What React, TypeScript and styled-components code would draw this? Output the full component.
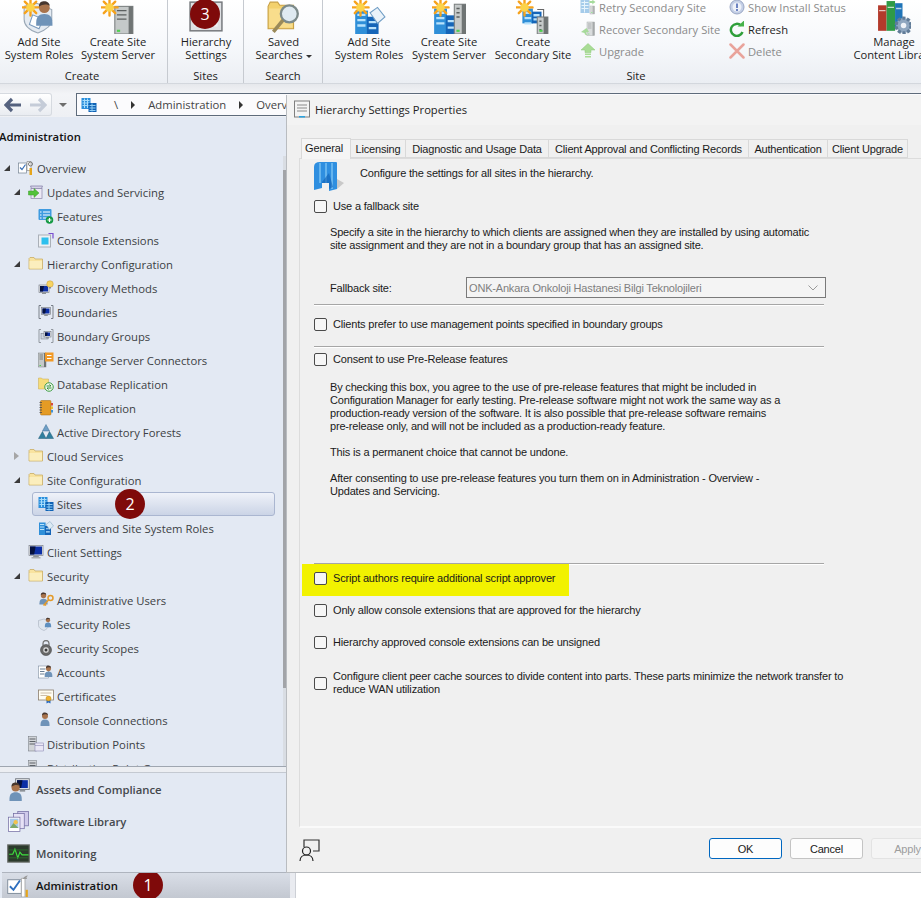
import React from "react";
import styled, { createGlobalStyle } from "styled-components";

const GlobalStyle = createGlobalStyle`
  html, body {
    margin: 0;
    padding: 0;
    width: 921px;
    height: 898px;
    overflow: hidden;
    background: #ffffff;
  }
  * { box-sizing: border-box; }
`;

const UI_FONT = `"Open Sans", "Noto Sans", sans-serif`;
const DIALOG_FONT = `"Liberation Sans", Arial, sans-serif`;

/* ---------- icons ---------- */

const Svg = ({ size = 16, children }: { size?: number; children: React.ReactNode }) => (
  <svg width={size} height={size} viewBox="0 0 32 32" style={{ flex: "none", display: "block" }}>
    {children}
  </svg>
);

const Sun = ({ x = 8, y = 8, r = 5 }: { x?: number; y?: number; r?: number }) => (
  <g>
    <g stroke="#f6a21c" strokeWidth="2.2" strokeLinecap="round">
      <path d={`M${x - r * 1.9} ${y}H${x + r * 1.9}M${x} ${y - r * 1.9}V${y + r * 1.9}`} />
      <path d={`M${x - r * 1.35} ${y - r * 1.35}L${x + r * 1.35} ${y + r * 1.35}M${x + r * 1.35} ${y - r * 1.35}L${x - r * 1.35} ${y + r * 1.35}`} />
    </g>
    <circle cx={x} cy={y} r={r} fill="#fcd34a" />
  </g>
);

const Person = ({ x = 20, y = 10, s = 1, coat = "#6f93b8" }: { x?: number; y?: number; s?: number; coat?: string }) => (
  <g transform={`translate(${x} ${y}) scale(${s})`}>
    <path d="M-9 16c0-7 3-10 9-10s9 3 9 10v3H-9z" fill={coat} />
    <circle cx="0" cy="-1" r="6" fill="#a8734c" />
    <path d="M-6-2c0-5 3-6 6-6s6 2 6 5c-3-2-8-2-12 1z" fill="#47372f" />
  </g>
);

const Tower = ({ x = 0, y = 0, h = 28, w = 14 }: { x?: number; y?: number; h?: number; w?: number }) => (
  <g>
    <rect x={x} y={y} width={w} height={h} fill="#c5c9c9" stroke="#7b8080" />
    <rect x={x + w - 4} y={y} width={4} height={h} fill="#6f7474" />
    <path d={`M${x + 2} ${y + 4}h${w - 8}M${x + 2} ${y + 8}h${w - 8}M${x + 2} ${y + 12}h${w - 8}`} stroke="#5c6060" strokeWidth="1.4" />
    <rect x={x + 2} y={y + h - 4} width="3" height="2" fill="#4fd04f" />
  </g>
);

const Building = ({ x = 0, y = 0, w = 22, h = 24 }: { x?: number; y?: number; w?: number; h?: number }) => (
  <g>
    <rect x={x} y={y + 3} width={w * 0.55} height={h - 3} fill="#2f8fd8" />
    <rect x={x + w * 0.5} y={y + h * 0.35} width={w * 0.5} height={h * 0.65} fill="#1565b8" />
    <path
      d={`M${x + 2} ${y + 7}h${w * 0.35}M${x + 2} ${y + 12}h${w * 0.35}M${x + 2} ${y + 17}h${w * 0.35}M${x + w * 0.58} ${y + h * 0.55}h${w * 0.32}M${x + w * 0.58} ${y + h * 0.78}h${w * 0.32}`}
      stroke="#b8e2fb"
      strokeWidth="2.2"
    />
  </g>
);

const Folder = () => (
  <Svg>
    <path d="M2 7V26h27V6H14l-2-3H4L2 5z" fill="#f8e3a0" stroke="#c9ad66" strokeWidth="1.6" />
    <path d="M3 10h25v15H3z" fill="#fbeebd" />
  </Svg>
);

const OverviewIcon = () => (
  <Svg>
    <rect x="1" y="6" width="16" height="20" fill="#fff" stroke="#7d8a99" strokeWidth="1.5" />
    <path d="M4 15l4 4 7-10" stroke="#3a71b7" strokeWidth="2.4" fill="none" />
    <path d="M18 3h8v18h-8z" fill="#fff" stroke="#8d8d8d" strokeWidth="1.4" />
    <rect x="23" y="16" width="5" height="14" fill="#e6a51c" />
    <circle cx="25" cy="8" r="4" fill="none" stroke="#777" strokeWidth="2" />
  </Svg>
);

const UpdatesIcon = () => (
  <Svg>
    <path d="M5 4h24l-2 5H7z" fill="#d5d3e8" stroke="#7e7aa3" strokeWidth="1.4" />
    <rect x="6" y="9" width="22" height="20" fill="#ece9f5" stroke="#8a87aa" strokeWidth="1.4" />
    <path d="M1 14h11V9l10 9-10 9v-5H1z" fill="#52c23b" stroke="#3c9a2a" />
  </Svg>
);

const FeaturesIcon = () => (
  <Svg>
    <rect x="1" y="2" width="26" height="22" rx="2" fill="#3f9be0" />
    <path d="M4 8h3M10 8h14M4 14h3M10 14h14M4 20h3M10 20h8" stroke="#fff" strokeWidth="2.2" />
    <circle cx="23" cy="24" r="7.5" fill="#169a45" />
    <path d="M23 20v8M19 24h8" stroke="#fff" strokeWidth="2.4" />
  </Svg>
);

const ExtensionsIcon = () => (
  <Svg>
    <rect x="1" y="6" width="24" height="24" fill="#eef0f3" stroke="#aab0b8" strokeWidth="2" />
    <rect x="7" y="11" width="14" height="14" fill="#2dc0ee" />
    <path d="M21 3h9v10" fill="none" stroke="#7a4fd0" strokeWidth="2.4" />
  </Svg>
);

const Monitor = ({ x = 6, y = 6, w = 20, h = 15 }: { x?: number; y?: number; w?: number; h?: number }) => (
  <g>
    <rect x={x} y={y} width={w} height={h} fill="#e7e9ec" stroke="#767b82" strokeWidth="1.3" />
    <rect x={x + 2} y={y + 2} width={w - 4} height={h - 4} fill="#0c2fa6" />
    <path d={`M${x + 2} ${y + 2}h${w * 0.4}l${-w * 0.1} ${h - 4}h${-w * 0.3}z`} fill="#05113f" />
    <rect x={x + w * 0.3} y={y + h} width={w * 0.4} height="3" fill="#8d9298" />
  </g>
);

const DiscoveryIcon = () => (
  <Svg>
    <Monitor x={2} y={10} w={20} h={15} />
    <circle cx="24" cy="8" r="6.5" fill="#f7d463" stroke="#c79b34" />
    <rect x="22" y="14" width="4" height="3" fill="#8c8c8c" />
  </Svg>
);

const BoundariesIcon = () => (
  <Svg>
    <path d="M6 3H2v26h4M26 3h4v26h-4" fill="none" stroke="#6f7680" strokeWidth="1.8" />
    <Monitor x={7} y={7} w={18} h={14} />
  </Svg>
);

const BoundaryGroupsIcon = () => (
  <Svg>
    <path d="M6 3H2v26h4M26 3h4v26h-4" fill="none" stroke="#8b9199" strokeWidth="1.8" />
    <rect x="6" y="11" width="14" height="11" fill="#cdd4df" stroke="#6d7480" />
    <Monitor x={12} y={7} w={14} h={11} />
  </Svg>
);

const ExchangeIcon = () => (
  <Svg>
    <Tower x={1} y={2} w={15} h={28} />
    <rect x="14" y="1" width="17" height="18" fill="#f19a27" />
    <path d="M18 7h9M18 13h9" stroke="#fff" strokeWidth="2" />
  </Svg>
);

const DbReplicationIcon = () => (
  <Svg>
    <path d="M1 4h6l2 2h12v20H1z" fill="#f6dd7a" stroke="#c9a94e" />
    <circle cx="22" cy="22" r="8.5" fill="#f2f7ee" stroke="#3f9e46" strokeWidth="2" />
    <path d="M17 20h9l-3-3M27 24h-9l3 3" fill="none" stroke="#2f8f38" strokeWidth="2" />
  </Svg>
);

const FileReplicationIcon = () => (
  <Svg>
    <rect x="5" y="1" width="21" height="29" rx="2" fill="#e49b25" stroke="#a76b10" />
    <path d="M3 5h5M3 10h5M3 15h5M3 20h5M3 25h5" stroke="#4a4a4a" strokeWidth="1.6" />
    <rect x="26" y="6" width="4" height="5" fill="#d84b3c" />
    <rect x="26" y="13" width="4" height="5" fill="#e7c12e" />
    <rect x="26" y="20" width="4" height="5" fill="#3f92d6" />
  </Svg>
);

const ForestsIcon = () => (
  <Svg>
    <path d="M16 1l7 13H9z" fill="#6f9fc6" stroke="#3c6e96" />
    <path d="M9 15l7 14H1z" fill="#2f7f9f" stroke="#245f78" />
    <path d="M23 15l8 14H16z" fill="#2f7f9f" stroke="#245f78" />
  </Svg>
);

const SitesIcon = () => (
  <Svg>
    <rect x="1" y="2" width="18" height="22" fill="#2c8fdc" />
    <path d="M3 7h14M3 12h14M3 17h14M7 3v19M13 3v19" stroke="#a6dcfb" strokeWidth="2" />
    <rect x="15" y="12" width="16" height="18" fill="#0f62b5" />
    <path d="M17 17h12M17 22h12M17 27h12M22 13v16" stroke="#8fcdf5" strokeWidth="2" />
  </Svg>
);

const ServersIcon = () => (
  <Svg>
    <Building x={2} y={2} w={24} h={28} />
    <path d="M16 9l8-6 7 9-8 7z" fill="#dceaf4" stroke="#7ca0bd" />
  </Svg>
);

const ClientSettingsIcon = () => (
  <Svg>
    <Monitor x={2} y={3} w={28} h={20} />
    <rect x="7" y="26" width="18" height="3" fill="#a9adb2" />
  </Svg>
);

const Key = () => (
  <g>
    <circle cx="25" cy="12" r="5" fill="none" stroke="#e39a2a" strokeWidth="3" />
    <path d="M21 16L11 27M13 24l3 3" stroke="#e39a2a" strokeWidth="3" />
  </g>
);

const AdminUsersIcon = () => (
  <Svg>
    <Person x={11} y={8} s={0.9} />
    <Key />
  </Svg>
);

const SecurityRolesIcon = () => (
  <Svg>
    <path d="M1 9l11-3 9 3v10c0 5-5 8-9 10-5-2-11-5-11-10z" fill="#dfe6ef" stroke="#9aa5b2" />
    <Person x={20} y={9} s={0.7} coat="#5e8fbf" />
  </Svg>
);

const ScopesIcon = () => (
  <Svg>
    <path d="M10 11V7a6 6 0 0112 0v4" fill="none" stroke="#777" strokeWidth="2.6" />
    <circle cx="16" cy="20" r="11" fill="#6a6a6a" stroke="#333" />
    <circle cx="16" cy="20" r="6.5" fill="#dcdcdc" stroke="#333" />
    <circle cx="16" cy="20" r="3" fill="#3a3a3a" />
  </Svg>
);

const AccountsIcon = () => (
  <Svg>
    <rect x="1" y="4" width="20" height="24" fill="#fff" stroke="#6b7d90" />
    <path d="M4 10h11M4 15h9M4 20h9" stroke="#5a6f86" strokeWidth="1.8" />
    <Person x={21} y={10} s={0.85} />
  </Svg>
);

const CertificatesIcon = () => (
  <Svg>
    <rect x="1" y="4" width="30" height="20" fill="#fffdf2" stroke="#8a7d6b" strokeWidth="1.6" />
    <path d="M5 10h22M5 15h14" stroke="#c6b79f" strokeWidth="1.8" />
    <path d="M17 24v7l4-2 4 2v-7" fill="#2a6bc2" />
    <circle cx="21" cy="21" r="5" fill="#efb12c" stroke="#bb8311" />
  </Svg>
);

const ConnectionsIcon = () => (
  <Svg>
    <Person x={14} y={9} s={1} />
  </Svg>
);

const DistPointsIcon = () => (
  <Svg>
    <rect x="1" y="1" width="16" height="29" fill="#d1d4d8" stroke="#6c7278" />
    <path d="M3 6h12M3 11h12M3 16h12" stroke="#50565c" strokeWidth="1.8" />
    <rect x="14" y="14" width="17" height="16" fill="#e9e7f5" stroke="#7b78a8" />
    <path d="M14 19h17" stroke="#7b78a8" />
  </Svg>
);

const AssetsIcon = () => (
  <Svg size={23}>
    <Monitor x={12} y={1} w={19} h={15} />
    <Person x={12} y={14} s={0.95} />
  </Svg>
);

const LibraryIcon = () => (
  <Svg size={23}>
    <rect x="15" y="2" width="15" height="20" fill="#cfc9ea" stroke="#6f6aa0" />
    <rect x="9" y="5" width="15" height="21" fill="#e6e1f5" stroke="#6f6aa0" />
    <rect x="2" y="10" width="16" height="20" fill="#fff" stroke="#6f6aa0" />
    <rect x="4" y="12" width="12" height="13" fill="#a9c9e8" />
    <path d="M4 25l5-7 7 7z" fill="#7da76a" />
    <circle cx="12" cy="17" r="3" fill="#f2c24b" />
  </Svg>
);

const MonitoringIcon = () => (
  <Svg size={23}>
    <rect x="1" y="4" width="30" height="24" fill="#2b3a2b" stroke="#6d716d" strokeWidth="1.6" />
    <path d="M3 17h5l3-7 4 12 3-8 3 4h9" fill="none" stroke="#3fe03f" strokeWidth="1.6" />
    <path d="M3 11h26M3 22h26" stroke="#2d7a2d" />
  </Svg>
);

const AdministrationIcon = () => (
  <Svg size={23}>
    <rect x="1" y="8" width="19" height="19" fill="#fff" stroke="#7d8a99" strokeWidth="1.3" />
    <path d="M4 17l5 5 9-13" stroke="#2f6fbe" strokeWidth="2.6" fill="none" />
    <path d="M20 6h5v26h-5z" fill="#fff" stroke="#9a9a9a" />
    <rect x="26" y="22" width="3" height="10" fill="#e6a51c" />
    <path d="M22 7c2-5 7-5 7-5l-2 3 1 2z" fill="#999" />
  </Svg>
);

const AddRolesIcon = () => (
  <Svg size={34}>
    <path d="M2 6l12-3 14 6v10c0 6-8 10-13 12C9 29 2 25 2 18z" fill="#e5ebf2" stroke="#9aa8b6" />
    <Sun x={8} y={7} r={4} />
    <path d="M10 14l10 4-4 9-9-4z" fill="#ffffff" stroke="#7a9abc" />
    <Person x={21} y={8} s={0.85} />
  </Svg>
);

const CreateServerIcon = () => (
  <Svg size={34}>
    <Tower x={13} y={6} w={17} h={26} />
    <Sun x={8} y={7} r={4} />
  </Svg>
);

const HierarchyRibbonIcon = () => (
  <Svg size={34}>
    <rect x="1" y="2" width="30" height="27" fill="#dfe1e4" stroke="#76797d" strokeWidth="1.4" />
    <rect x="5" y="7" width="22" height="18" fill="#eef1f4" />
  </Svg>
);

const SavedSearchIcon = () => (
  <Svg size={34}>
    <path d="M1 6V27h24V5H12L10 2H3z" fill="#f3d16d" stroke="#c79f43" />
    <path d="M2 8h22v18H2z" fill="#f8dd8c" />
    <circle cx="21" cy="13" r="8" fill="#dfeaf1" stroke="#7c8a8a" strokeWidth="2.2" />
    <path d="M15 19L6 30" stroke="#9a8a5a" strokeWidth="3.4" />
  </Svg>
);

const AddRolesBlueIcon = () => (
  <Svg size={34}>
    <Building x={3} y={7} w={22} h={25} />
    <path d="M17 12l7-5 7 9-7 6z" fill="#eaf2f9" stroke="#6e9cc4" />
    <Sun x={8} y={7} r={4} />
  </Svg>
);

const CreateServerBlueIcon = () => (
  <Svg size={34}>
    <Building x={2} y={5} w={22} h={27} />
    <Tower x={21} y={4} w={11} h={28} />
    <Sun x={8} y={7} r={4} />
  </Svg>
);

const CreateSecondaryIcon = () => (
  <Svg size={34}>
    <Building x={6} y={5} w={18} h={17} />
    <path d="M20 9h6v8" fill="none" stroke="#666" />
    <Tower x={20} y={16} w={10} h={16} />
    <Sun x={8} y={7} r={4} />
  </Svg>
);

const SitesGlyph = () => (
  <g>
    <rect x="1" y="2" width="18" height="26" fill="#5ea4da" />
    <path d="M3 7h14M3 13h14M3 19h14M9 3v24" stroke="#d3ecfb" strokeWidth="2" />
  </g>
);

const RetryIcon = () => (
  <Svg>
    <g opacity="0.55">
      <SitesGlyph />
      <path d="M19 4h6l-1-3 7 5-7 5 1-3h-6z" fill="#5fbf4c" />
      <Tower x={20} y={14} w={9} h={16} />
    </g>
  </Svg>
);

const RecoverIcon = () => (
  <Svg>
    <g opacity="0.6">
      <Tower x={14} y={2} w={15} h={27} />
      <path d="M13 14L2 22l7 2c0 3 3 5 6 5l-3-6 6-1z" fill="#72c65c" />
    </g>
  </Svg>
);

const UpgradeIcon = () => (
  <Svg>
    <path d="M16 1l14 13h-8v5H10v-5H2z" fill="#a9dc96" stroke="#8bc877" />
    <path d="M10 21h12v3H10zM10 26h12v3H10z" fill="#a9dc96" />
  </Svg>
);

const InfoIcon = () => (
  <Svg>
    <circle cx="16" cy="16" r="14" fill="#c4cfe6" stroke="#9aa7c4" strokeWidth="2" />
    <circle cx="16" cy="16" r="9" fill="#eef1f8" />
    <rect x="14" y="9" width="4" height="9" fill="#6d83c2" />
    <rect x="14" y="20" width="4" height="4" fill="#6d83c2" />
  </Svg>
);

const RefreshIcon = () => (
  <Svg>
    <path d="M24 9A12 12 0 1 0 27 22" fill="none" stroke="#2f9f3a" strokeWidth="5" />
    <path d="M17 11h13V-1z" fill="#45b24a" />
  </Svg>
);

const DeleteIcon = () => (
  <Svg>
    <path d="M3 3l26 26M29 3L3 29" stroke="#e9a39b" strokeWidth="5" strokeLinecap="round" />
  </Svg>
);

const ContentLibraryIcon = () => (
  <Svg size={34}>
    <rect x="1" y="5" width="8" height="24" fill="#b33a2b" />
    <rect x="9" y="1" width="8" height="28" fill="#2f9a46" />
    <rect x="17" y="3" width="7" height="24" fill="#1f74b8" />
    <path d="M2 10h6M10 7h6M18 8h5" stroke="#fff" strokeWidth="1.2" opacity="0.7" />
    <circle cx="25" cy="24" r="7" fill="#8fa7c0" stroke="#617c98" strokeWidth="3" strokeDasharray="3 1.5" />
    <circle cx="25" cy="24" r="2.6" fill="#eef3f8" />
  </Svg>
);

/* ---------- ribbon ---------- */

const Ribbon = styled.header`
  display: flex;
  height: 84px;
  background: linear-gradient(#ffffff 0%, #f6f8fb 55%, #ebeef3 100%);
  border-bottom: 1px solid #d3d7dd;
  font-family: ${UI_FONT};
  font-size: 11.2px;
  color: #1d1d1d;
  overflow: hidden;
`;

const RibbonGroup = styled.section<{ $w: number }>`
  flex: none;
  width: ${(p) => p.$w}px;
  display: flex;
  flex-direction: column;
  border-right: 1px solid #c6cad0;
`;

const GroupItems = styled.div<{ $pad?: number }>`
  flex: 1;
  display: flex;
  padding-left: ${(p) => p.$pad ?? 0}px;
`;

const GroupLabel = styled.div<{ $w?: number }>`
  height: 15px;
  width: ${(p) => (p.$w ? `${p.$w}px` : "auto")};
  line-height: 15px;
  text-align: center;
  color: #222;
`;

const BigButton = styled.div<{ $w: number }>`
  position: relative;
  flex: none;
  width: ${(p) => p.$w}px;
  display: flex;
  flex-direction: column;
  align-items: center;
  line-height: 13px;
  text-align: center;
  white-space: nowrap;
  & > svg {
    margin-bottom: 1px;
  }
`;

const SmallColumn = styled.div<{ $w: number; $gap?: number }>`
  flex: none;
  width: ${(p) => p.$w}px;
  display: flex;
  flex-direction: column;
  margin: -4px 0 0 ${(p) => p.$gap ?? 0}px;
`;

const SmallButton = styled.div<{ $off?: boolean }>`
  height: 22px;
  display: flex;
  align-items: center;
  gap: 3px;
  white-space: nowrap;
  color: ${(p) => (p.$off ? "#8b8b8b" : "#1d1d1d")};
`;

const Caret = styled.span`
  display: inline-block;
  margin-left: 3px;
  vertical-align: middle;
  border-left: 3px solid transparent;
  border-right: 3px solid transparent;
  border-top: 3px solid #333;
`;

const Badge = styled.div<{ $left: number; $top: number }>`
  position: absolute;
  left: ${(p) => p.$left}px;
  top: ${(p) => p.$top}px;
  width: 30px;
  height: 30px;
  border-radius: 50%;
  background: #7f0a0a;
  color: #ffffff;
  font-family: ${UI_FONT};
  font-size: 16px;
  font-weight: 400;
  line-height: 30px;
  text-align: center;
`;

/* ---------- navigation bar ---------- */

const Page = styled.div`
  position: relative;
  width: 921px;
  height: 898px;
  overflow: hidden;
  background: #ffffff;
`;

const NavStrip = styled.div`
  height: 33px;
  padding-top: 9px;
  display: flex;
  align-items: flex-start;
  background: linear-gradient(#e6e8ec, #f3f4f7 30%, #eef0f4);
  font-family: ${UI_FONT};
  font-size: 11.3px;
  color: #444;
`;

const BackForward = styled.div`
  flex: none;
  width: 52px;
  height: 23px;
  display: flex;
  align-items: center;
  justify-content: space-around;
  background: linear-gradient(#ffffff, #e9ecf1);
  border-radius: 0 3px 3px 0;
  border: 1px solid #d6dae0;
  border-left: none;
`;

const NavDrop = styled.div`
  flex: none;
  width: 24px;
  padding: 10px 0 0 7px;
  & > i {
    display: block;
    width: 0;
    border-left: 4px solid transparent;
    border-right: 4px solid transparent;
    border-top: 4px solid #6d6d6d;
  }
`;

const AddressBar = styled.div`
  flex: 1;
  height: 23px;
  display: flex;
  align-items: center;
  gap: 13px;
  padding-left: 4px;
  background: #fbfbfd;
  border: 1px solid #5e6b7b;
  border-right: none;
  & > svg {
    margin-right: 4px;
  }
`;

const Crumb = styled.span`
  white-space: nowrap;
`;

const CrumbArrow = styled.i`
  width: 0;
  border-top: 4px solid transparent;
  border-bottom: 4px solid transparent;
  border-left: 4px solid #333;
`;

/* ---------- left pane ---------- */

const Body = styled.div`
  display: flex;
  height: 781px;
`;

const LeftPane = styled.aside`
  flex: none;
  width: 290px;
  display: flex;
  flex-direction: column;
  background: #e3e9f3;
  font-family: ${UI_FONT};
  font-size: 11.3px;
  color: #3c3f44;
`;

const PaneEdge = styled.div`
  flex: none;
  width: 6px;
  background: #e9ebf0;
  border-right: 1px solid #cdd0d6;
`;

const PaneTitle = styled.div`
  height: 39px;
  padding: 12px 0 0 0;
  margin-left: -1px;
  font-weight: 600;
  color: #111;
`;

const TreeArea = styled.div`
  flex: none;
  height: 610px;
  display: flex;
  overflow: hidden;
`;

const TreeList = styled.ul`
  flex: none;
  width: 283px;
  margin: 0;
  padding: 0;
  list-style: none;
`;

const TreeRow = styled.li<{ $level: number }>`
  position: relative;
  height: 24px;
  display: flex;
  align-items: center;
  padding-left: ${(p) => p.$level * 10}px;
`;

const Expander = styled.span<{ $state?: "open" | "closed" }>`
  flex: none;
  width: 18px;
  height: 10px;
  position: relative;
  &::before {
    content: "";
    display: ${(p) => (p.$state ? "block" : "none")};
    position: absolute;
    left: 4px;
    top: ${(p) => (p.$state === "open" ? "2px" : "1px")};
    width: 0;
    ${(p) =>
      p.$state === "open"
        ? "border-left: 6px solid transparent; border-bottom: 6px solid #3a3a3a;"
        : "border-top: 4px solid transparent; border-bottom: 4px solid transparent; border-left: 5px solid #a6a6a6;"}
  }
`;

const TreeLabel = styled.div<{ $selected?: boolean }>`
  flex: 1;
  height: 24px;
  display: flex;
  align-items: center;
  gap: 3px;
  white-space: nowrap;
  ${(p) =>
    p.$selected &&
    `
    margin: 0 8px 0 -6px;
    padding-left: 5px;
    border: 1px solid #aab6d0;
    border-radius: 3px;
    background: linear-gradient(#eff2f9, #cbd4e6);
  `}
`;

const ScrollTrack = styled.div`
  flex: none;
  width: 3px;
  background: #d9dde3;
  padding-top: 14px;
`;

const ScrollThumb = styled.div`
  height: 518px;
  background: #a2a4a8;
`;

const Splitter = styled.div`
  height: 7px;
  background: #eceef2;
  border-top: 1px solid #9fa6b0;
  border-bottom: 1px solid #c4c9d1;
`;

const WunderRow = styled.div`
  height: 32px;
  display: flex;
  align-items: center;
  gap: 6px;
  padding-left: 7px;
  font-weight: 600;
  font-size: 11.3px;
  color: #45484d;
`;

const WunderSelected = styled(WunderRow)`
  position: relative;
  height: 26px;
  margin: 3px 0 0 2px;
  padding-left: 5px;
  overflow: hidden;
  color: #111;
  background: linear-gradient(#d9dee7, #c3c8d1);
  border-top: 1px solid #aeb4be;
`;

/* ---------- dialog ---------- */

const Dialog = styled.div`
  position: absolute;
  left: 286px;
  top: 95px;
  width: 660px;
  height: 778px;
  display: flex;
  flex-direction: column;
  background: #f0f0f0;
  border-left: 1px solid #b9bcc0;
  border-bottom: 1px solid #b9bcc0;
  font-family: ${DIALOG_FONT};
  font-size: 11px;
  letter-spacing: -0.18px;
  color: #1a1a1a;
`;

const TitleBar = styled.div`
  flex: none;
  height: 30px;
  padding: 0 0 2px 7px;
  display: flex;
  align-items: center;
  gap: 5px;
  background: #f3f3f3;
  font-family: ${UI_FONT};
  font-size: 11.2px;
  letter-spacing: 0;
  color: #222;
`;

const TabStrip = styled.div`
  flex: none;
  height: 33px;
  padding: 13px 0 0 14px;
  display: flex;
  align-items: flex-end;
`;

const Tab = styled.div<{ $w: number; $active?: boolean }>`
  flex: none;
  width: ${(p) => p.$w}px;
  height: ${(p) => (p.$active ? 21 : 19)}px;
  line-height: 18px;
  text-align: center;
  white-space: nowrap;
  padding-right: ${(p) => (p.$active ? 4 : 0)}px;
  border: 1px solid #d9d9d9;
  border-bottom: ${(p) => (p.$active ? "none" : "1px solid #d9d9d9")};
  border-left: ${(p) => (p.$active ? "1px solid #d9d9d9" : "none")};
  background: ${(p) => (p.$active ? "#f5f5f5" : "#f0f0f0")};
  margin-bottom: ${(p) => (p.$active ? "-1px" : "0")};
  position: relative;
`;

const TabPanel = styled.div`
  flex: none;
  height: 670px;
  margin-left: 12px;
  padding: 0 0 0 14px;
  border-top: 1px solid #dcdcdc;
  border-left: 1px solid #dcdcdc;
  border-bottom: 2px solid #fafafa;
  overflow: hidden;
`;

const PanelHead = styled.div`
  height: 41px;
  padding-top: 6px;
  margin-left: -1px;
  display: flex;
  gap: 15px;
  line-height: 16px;
  & > svg {
    margin-top: -4px;
  }
`;

const CheckRow = styled.label<{ $top?: number; $highlight?: boolean }>`
  display: flex;
  align-items: center;
  gap: 6px;
  margin-top: ${(p) => p.$top ?? 0}px;
  min-height: 20px;
  line-height: 13px;
  white-space: nowrap;
  ${(p) =>
    p.$highlight &&
    `
    width: 267px;
    height: 32px;
    margin-left: -12px;
    padding: 0 0 3px 12px;
    background: #f2f200;
  `}
`;

const Box = styled.span`
  flex: none;
  width: 13px;
  height: 13px;
  border: 1px solid #4a4a4a;
  border-radius: 2px;
  background: #f6f6f6;
`;

const Paragraph = styled.p<{ $top: number }>`
  margin: ${(p) => p.$top}px 0 0 16px;
  line-height: 13px;
  white-space: pre-line;
`;

const FieldRow = styled.div`
  display: flex;
  align-items: center;
  margin: 25px 0 0 16px;
  height: 21px;
`;

const FieldLabel = styled.span`
  flex: none;
  width: 136px;
`;

const SelectBox = styled.div`
  flex: none;
  width: 360px;
  height: 21px;
  display: flex;
  align-items: center;
  justify-content: space-between;
  padding: 0 7px 0 2px;
  border: 1px solid #7a7a7a;
  background: #f4f4f4;
  color: #7f7f7f;
`;

const Divider = styled.hr<{ $top: number }>`
  width: 510px;
  height: 1px;
  margin: ${(p) => p.$top}px 0 0 0;
  border: none;
  background: #a6a6a6;
  box-shadow: 0 1px 0 #ffffff;
`;

const Footer = styled.div`
  flex: 1;
  display: flex;
  align-items: flex-start;
  padding: 10px 0 0 12px;
  gap: 8px;
`;

const FooterIcon = styled.div`
  margin-right: 380px;
`;

const DialogButton = styled.button<{ $kind?: "primary" | "disabled" }>`
  flex: none;
  width: 73px;
  height: 21px;
  padding: 0;
  font: inherit;
  letter-spacing: inherit;
  border-radius: 3px;
  background: ${(p) => (p.$kind === "disabled" ? "#f5f5f5" : "#fdfdfd")};
  color: ${(p) => (p.$kind === "disabled" ? "#9d9d9d" : "#1a1a1a")};
  border: 1px solid
    ${(p) => (p.$kind === "primary" ? "#0067c0" : p.$kind === "disabled" ? "#e3e3e3" : "#c4c4c4")};
`;

/* ---------- data ---------- */

type Node = {
  label: string;
  level: number;
  state?: "open" | "closed";
  icon: React.ReactNode;
  selected?: boolean;
  badge?: string;
};

const tree: Node[] = [
  { label: "Overview", level: 0, state: "open", icon: <OverviewIcon /> },
  { label: "Updates and Servicing", level: 1, state: "open", icon: <UpdatesIcon /> },
  { label: "Features", level: 2, icon: <FeaturesIcon /> },
  { label: "Console Extensions", level: 2, icon: <ExtensionsIcon /> },
  { label: "Hierarchy Configuration", level: 1, state: "open", icon: <Folder /> },
  { label: "Discovery Methods", level: 2, icon: <DiscoveryIcon /> },
  { label: "Boundaries", level: 2, icon: <BoundariesIcon /> },
  { label: "Boundary Groups", level: 2, icon: <BoundaryGroupsIcon /> },
  { label: "Exchange Server Connectors", level: 2, icon: <ExchangeIcon /> },
  { label: "Database Replication", level: 2, icon: <DbReplicationIcon /> },
  { label: "File Replication", level: 2, icon: <FileReplicationIcon /> },
  { label: "Active Directory Forests", level: 2, icon: <ForestsIcon /> },
  { label: "Cloud Services", level: 1, state: "closed", icon: <Folder /> },
  { label: "Site Configuration", level: 1, state: "open", icon: <Folder /> },
  { label: "Sites", level: 2, icon: <SitesIcon />, selected: true, badge: "2" },
  { label: "Servers and Site System Roles", level: 2, icon: <ServersIcon /> },
  { label: "Client Settings", level: 1, icon: <ClientSettingsIcon /> },
  { label: "Security", level: 1, state: "open", icon: <Folder /> },
  { label: "Administrative Users", level: 2, icon: <AdminUsersIcon /> },
  { label: "Security Roles", level: 2, icon: <SecurityRolesIcon /> },
  { label: "Security Scopes", level: 2, icon: <ScopesIcon /> },
  { label: "Accounts", level: 2, icon: <AccountsIcon /> },
  { label: "Certificates", level: 2, icon: <CertificatesIcon /> },
  { label: "Console Connections", level: 2, icon: <ConnectionsIcon /> },
  { label: "Distribution Points", level: 1, icon: <DistPointsIcon /> },
  { label: "Distribution Point Groups", level: 1, icon: <DistPointsIcon /> },
];

const tabs = [
  { label: "General", w: 50, active: true },
  { label: "Licensing", w: 55 },
  { label: "Diagnostic and Usage Data", w: 143 },
  { label: "Client Approval and Conflicting Records", w: 200 },
  { label: "Authentication", w: 79 },
  { label: "Client Upgrade", w: 80 },
];

function Arrow({ dim, flip }: { dim?: boolean; flip?: boolean }) {
  return (
    <svg width="18" height="16" viewBox="0 0 18 16" style={{ transform: flip ? "scaleX(-1)" : "none" }}>
      <path d="M2 8H17M8 2L2 8l6 6" fill="none" stroke={dim ? "#c5ccd8" : "#55627f"} strokeWidth="3.2" />
    </svg>
  );
}

function App() {
  return (
    <Page>
      <GlobalStyle />
      <Ribbon>
        <RibbonGroup $w={168}>
          <GroupItems>
            <BigButton $w={78}>
              <AddRolesIcon />
              Add Site
              <br />
              System Roles
            </BigButton>
            <BigButton $w={80}>
              <CreateServerIcon />
              Create Site
              <br />
              System Server
            </BigButton>
          </GroupItems>
          <GroupLabel $w={164}>Create</GroupLabel>
        </RibbonGroup>
        <RibbonGroup $w={76}>
          <GroupItems>
            <BigButton $w={76}>
              <HierarchyRibbonIcon />
              Hierarchy
              <br />
              Settings
              <Badge $left={22} $top={-1}>3</Badge>
            </BigButton>
          </GroupItems>
          <GroupLabel>Sites</GroupLabel>
        </RibbonGroup>
        <RibbonGroup $w={79}>
          <GroupItems>
            <BigButton $w={79}>
              <SavedSearchIcon />
              Saved
              <br />
              <span>
                Searches
                <Caret />
              </span>
            </BigButton>
          </GroupItems>
          <GroupLabel>Search</GroupLabel>
        </RibbonGroup>
        <RibbonGroup $w={650}>
          <GroupItems $pad={10}>
            <BigButton $w={72}>
              <AddRolesBlueIcon />
              Add Site
              <br />
              System Roles
            </BigButton>
            <BigButton $w={88}>
              <CreateServerBlueIcon />
              Create Site
              <br />
              System Server
            </BigButton>
            <BigButton $w={80}>
              <CreateSecondaryIcon />
              Create
              <br />
              Secondary Site
            </BigButton>
            <SmallColumn $w={149} $gap={7}>
              <SmallButton $off>
                <RetryIcon />
                Retry Secondary Site
              </SmallButton>
              <SmallButton $off>
                <RecoverIcon />
                Recover Secondary Site
              </SmallButton>
              <SmallButton $off>
                <UpgradeIcon />
                Upgrade
              </SmallButton>
            </SmallColumn>
            <SmallColumn $w={125}>
              <SmallButton $off>
                <InfoIcon />
                Show Install Status
              </SmallButton>
              <SmallButton>
                <RefreshIcon />
                Refresh
              </SmallButton>
              <SmallButton $off>
                <DeleteIcon />
                Delete
              </SmallButton>
            </SmallColumn>
            <BigButton $w={80}>
              <ContentLibraryIcon />
              Manage
              <br />
              Content Library
            </BigButton>
          </GroupItems>
          <GroupLabel $w={626}>Site</GroupLabel>
        </RibbonGroup>
      </Ribbon>

      <NavStrip>
        <BackForward>
          <Arrow />
          <Arrow dim flip />
        </BackForward>
        <NavDrop>
          <i />
        </NavDrop>
        <AddressBar>
          <SitesIcon />
          <Crumb>\</Crumb>
          <CrumbArrow />
          <Crumb>Administration</Crumb>
          <CrumbArrow />
          <Crumb>Overview</Crumb>
        </AddressBar>
      </NavStrip>

      <Body>
        <LeftPane>
          <PaneTitle>Administration</PaneTitle>
          <TreeArea>
            <TreeList>
              {tree.map((node) => (
                <TreeRow key={node.label} $level={node.level}>
                  <Expander $state={node.state} />
                  <TreeLabel $selected={node.selected}>
                    {node.icon}
                    {node.label}
                  </TreeLabel>
                  {node.badge && (
                    <Badge $left={115} $top={-3}>
                      {node.badge}
                    </Badge>
                  )}
                </TreeRow>
              ))}
            </TreeList>
            <ScrollTrack>
              <ScrollThumb />
            </ScrollTrack>
          </TreeArea>
          <Splitter />
          <WunderRow>
            <AssetsIcon />
            Assets and Compliance
          </WunderRow>
          <WunderRow>
            <LibraryIcon />
            Software Library
          </WunderRow>
          <WunderRow>
            <MonitoringIcon />
            Monitoring
          </WunderRow>
          <WunderSelected>
            <AdministrationIcon />
            Administration
            <Badge $left={131} $top={-3}>1</Badge>
          </WunderSelected>
        </LeftPane>
        <PaneEdge />
      </Body>

      <Dialog>
        <TitleBar>
          <svg width="16" height="18" viewBox="0 0 16 18">
            <rect x="0.5" y="1" width="15" height="16" fill="#f4f4f4" stroke="#7f7f7f" />
            <path d="M3 5h10M3 8h10M3 11h10" stroke="#8a8a8a" />
            <rect x="5" y="16" width="6" height="1.5" fill="#2aa3e0" />
          </svg>
          Hierarchy Settings Properties
        </TitleBar>
        <TabStrip>
          {tabs.map((tab) => (
            <Tab key={tab.label} $w={tab.w} $active={tab.active}>
              {tab.label}
            </Tab>
          ))}
        </TabStrip>
        <TabPanel>
          <PanelHead>
            <Svg size={32}>
              <path d="M1 6q0-5 6-5h16q1 0 1 1v26l-8 2V22H9v5l-8 2z" fill="#2f8fe0" />
              <path d="M7 2v20M13 2v20M19 2v26" stroke="#7cc4f4" strokeWidth="1.4" />
              <path d="M9 21l7-9 4 14-4 2v-6H9z" fill="#0f5fb4" opacity="0.6" />
              <path d="M24 18l7 4-7 6z" fill="#c9c9c9" />
            </Svg>
            <span>Configure the settings for all sites in the hierarchy.</span>
          </PanelHead>
          <CheckRow $top={-4}>
            <Box />
            Use a fallback site
          </CheckRow>
          <Paragraph $top={10}>
            {"Specify a site in the hierarchy to which clients are assigned when they are installed by using automatic\nsite assignment and they are not in a boundary group that has an assigned site."}
          </Paragraph>
          <FieldRow>
            <FieldLabel>Fallback site:</FieldLabel>
            <SelectBox>
              ONK-Ankara Onkoloji Hastanesi Bilgi Teknolojileri
              <svg width="10" height="6" viewBox="0 0 10 6">
                <path d="M0.5 0.5L5 5l4.5-4.5" fill="none" stroke="#9a9a9a" />
              </svg>
            </SelectBox>
          </FieldRow>
          <Divider $top={6} />
          <CheckRow $top={9}>
            <Box />
            Clients prefer to use management points specified in boundary groups
          </CheckRow>
          <Divider $top={12} />
          <CheckRow $top={2}>
            <Box />
            Consent to use Pre-Release features
          </CheckRow>
          <Paragraph $top={12}>
            {"By checking this box, you agree to the use of pre-release features that might be included in\nConfiguration Manager for early testing. Pre-release software might not work the same way as a\nproduction-ready version of the software. It is also possible that pre-release software remains\npre-release only, and will not be included as a production-ready feature."}
          </Paragraph>
          <Paragraph $top={13}>This is a permanent choice that cannot be undone.</Paragraph>
          <Paragraph $top={13}>
            {"After consenting to use pre-release features you turn them on in Administration - Overview -\nUpdates and Servicing."}
          </Paragraph>
          <Divider $top={65} />
          <CheckRow $highlight>
            <Box />
            Script authors require additional script approver
          </CheckRow>
          <CheckRow $top={4}>
            <Box />
            Only allow console extensions that are approved for the hierarchy
          </CheckRow>
          <CheckRow $top={12}>
            <Box />
            Hierarchy approved console extensions can be unsigned
          </CheckRow>
          <CheckRow $top={18}>
            <Box />
            <span>
              Configure client peer cache sources to divide content into parts. These parts minimize the network transfer to
              <br />
              reduce WAN utilization
            </span>
          </CheckRow>
        </TabPanel>
        <Footer>
          <FooterIcon>
            <svg width="22" height="24" viewBox="0 0 22 24">
              <path d="M5 9V2h15v11h-6" fill="none" stroke="#333" strokeWidth="1.2" />
              <circle cx="7.5" cy="13" r="4" fill="#f0f0f0" stroke="#222" strokeWidth="1.2" />
              <path d="M1 23c0-4 3-6 6.5-6S14 19 14 23" fill="none" stroke="#222" strokeWidth="1.2" />
            </svg>
          </FooterIcon>
          <DialogButton $kind="primary">OK</DialogButton>
          <DialogButton>Cancel</DialogButton>
          <DialogButton $kind="disabled">Apply</DialogButton>
        </Footer>
      </Dialog>
    </Page>
  );
}

export default App;
